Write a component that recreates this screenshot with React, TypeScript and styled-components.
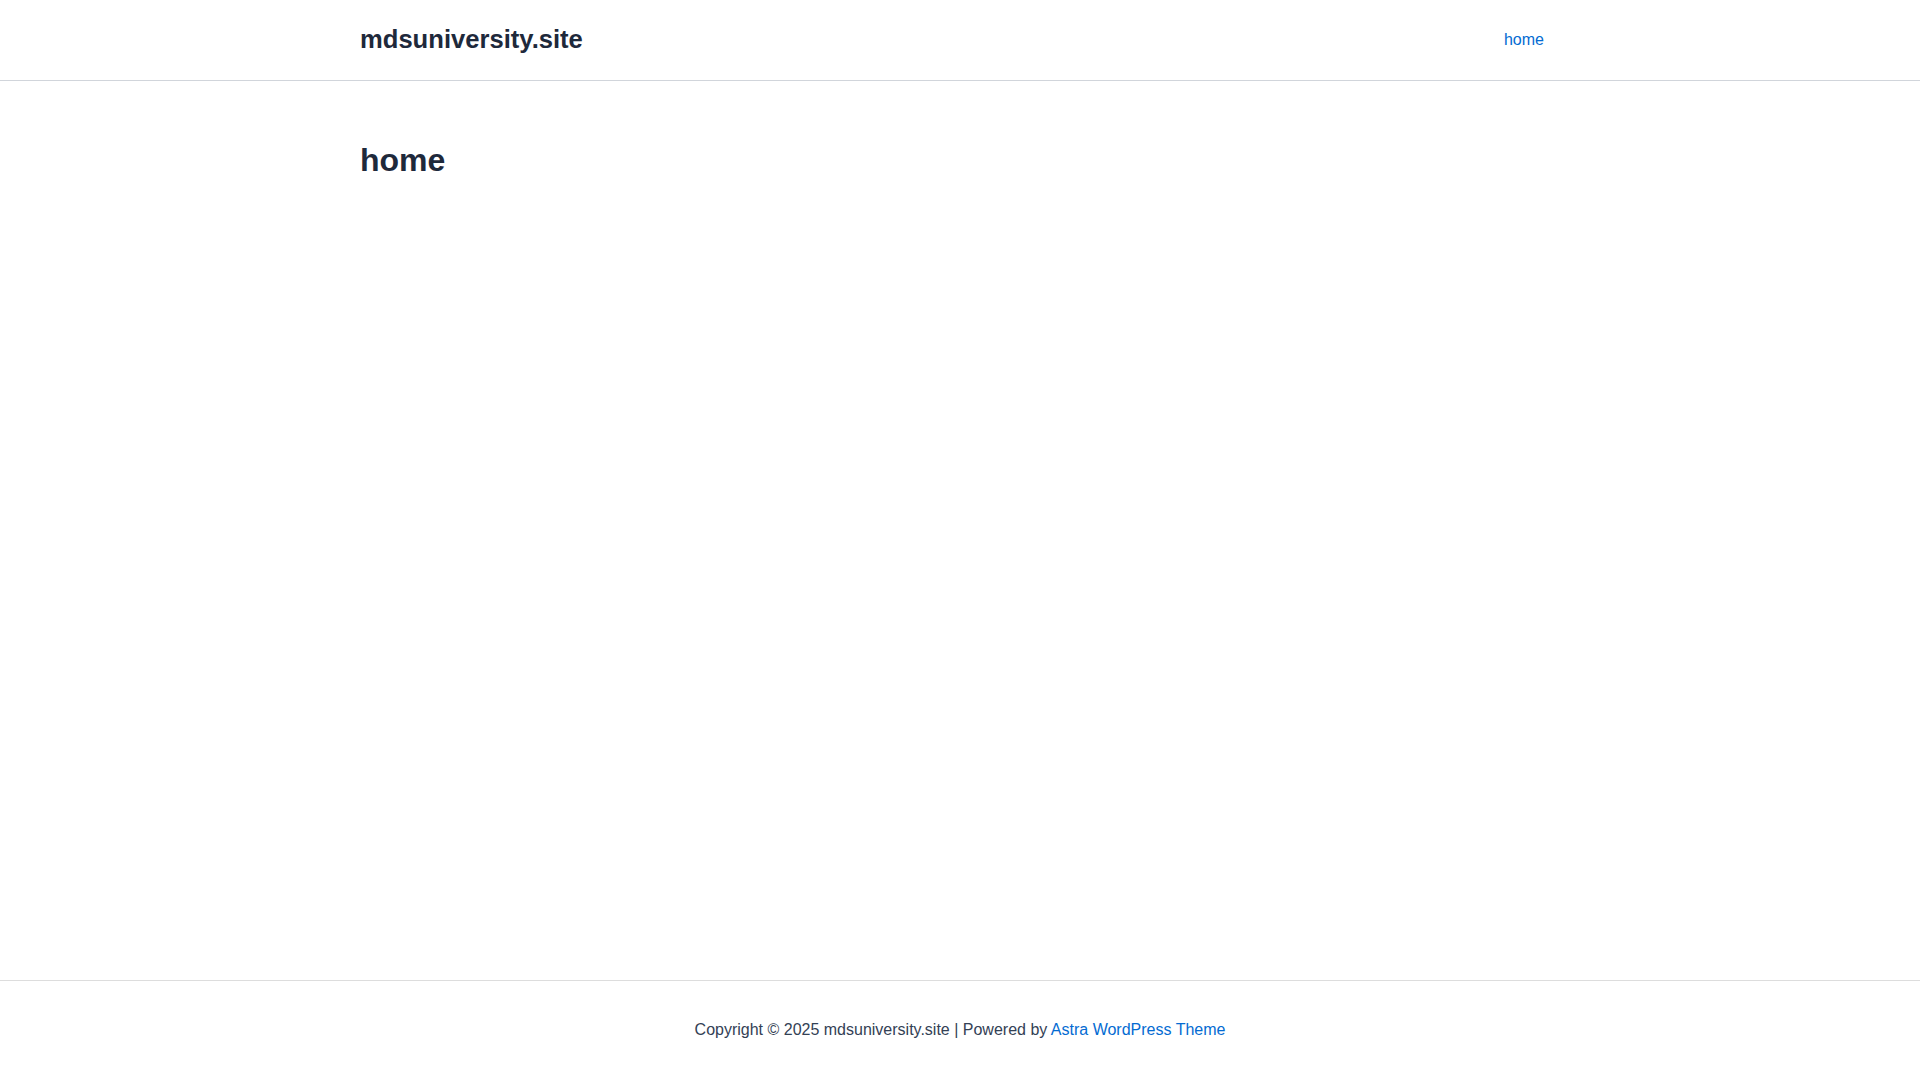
import React from 'react';
import styled, { createGlobalStyle } from 'styled-components';

const GlobalStyle = createGlobalStyle`
  html, body {
    margin: 0;
    padding: 0;
    background: #ffffff;
  }
  body {
    font-family: "Liberation Sans", Arial, Helvetica, sans-serif;
    color: #334155;
    -webkit-font-smoothing: antialiased;
  }
  #root {
    min-height: 100vh;
  }
`;

const Page = styled.div`
  display: flex;
  flex-direction: column;
  min-height: 100vh;
`;

const Header = styled.header`
  height: 80px;
  border-bottom: 1px solid #d1d5db;
  box-sizing: content-box;
`;

const Inner = styled.div`
  max-width: 1200px;
  margin: 0 auto;
  height: 100%;
  display: flex;
  align-items: center;
  justify-content: space-between;
`;

const SiteTitle = styled.a`
  font-size: 25.6px;
  font-weight: 700;
  color: #1e293b;
  text-decoration: none;
  line-height: 1.2;
  margin-bottom: 2px;
`;

const Nav = styled.nav`
  display: flex;
  height: 100%;
`;

const NavLink = styled.a`
  display: flex;
  align-items: center;
  padding: 0 16px;
  font-size: 16px;
  color: #046bd2;
  text-decoration: none;
`;

const Main = styled.main`
  flex: 1;
`;

const Content = styled.div`
  max-width: 1200px;
  margin: 0 auto;
  padding-top: 60px;
`;

const EntryTitle = styled.h1`
  margin: 0;
  font-size: 32px;
  line-height: 1.2;
  font-weight: 700;
  color: #1e293b;
`;

const Footer = styled.footer`
  height: 100px;
  box-sizing: border-box;
  padding-bottom: 2px;
  border-top: 1px solid #dddddd;
  display: flex;
  align-items: center;
  justify-content: center;
  font-size: 16px;
  color: #334155;
`;

const FooterLink = styled.a`
  color: #046bd2;
  text-decoration: none;
`;

export default function App() {
  return (
    <Page>
      <GlobalStyle />
      <Header>
        <Inner>
          <SiteTitle href="#">mdsuniversity.site</SiteTitle>
          <Nav>
            <NavLink href="#">home</NavLink>
          </Nav>
        </Inner>
      </Header>
      <Main>
        <Content>
          <EntryTitle>home</EntryTitle>
        </Content>
      </Main>
      <Footer>
        <span>
          Copyright © 2025 mdsuniversity.site | Powered by{' '}
          <FooterLink href="#">Astra WordPress Theme</FooterLink>
        </span>
      </Footer>
    </Page>
  );
}
